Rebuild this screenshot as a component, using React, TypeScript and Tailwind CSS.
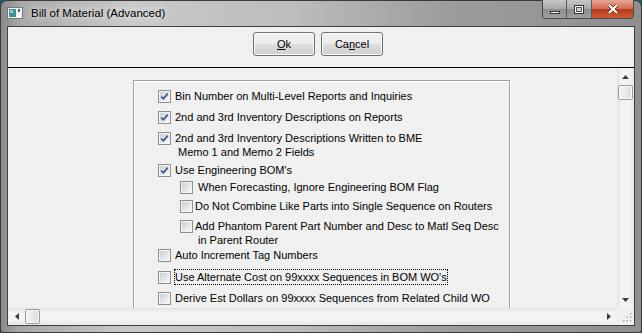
import type { ReactNode } from "react";

type Row = {
  lines: string[];
  checked?: boolean;
  sub?: boolean;
  focus?: boolean;
  lead?: boolean;
  mt: string;
};

const rows: Row[] = [
  { lines: ["Bin Number on Multi-Level Reports and Inquiries"], checked: true, mt: "mt-[8px]" },
  { lines: ["2nd and 3rd Inventory Descriptions on Reports"], checked: true, mt: "mt-[7px]" },
  {
    lines: ["2nd and 3rd Inventory Descriptions Written to BME", "Memo 1 and Memo 2 Fields"],
    checked: true,
    mt: "mt-[7px]",
  },
  { lines: ["Use Engineering BOM's"], checked: true, mt: "mt-[4px]" },
  { lines: ["When Forecasting, Ignore Engineering BOM Flag"], sub: true, lead: true, mt: "mt-[3px]" },
  { lines: ["Do Not Combine Like Parts into Single Sequence on Routers"], sub: true, mt: "mt-[5px]" },
  {
    lines: ["Add Phantom Parent Part Number and Desc to Matl Seq Desc", "in Parent Router"],
    sub: true,
    mt: "mt-[6px]",
  },
  { lines: ["Auto Increment Tag Numbers"], mt: "mt-[1px]" },
  { lines: ["Use Alternate Cost on 99xxxx Sequences in BOM WO's"], focus: true, mt: "mt-[8px]" },
  { lines: ["Derive Est Dollars on 99xxxx Sequences from Related Child WO"], mt: "mt-[7px]" },
];

function CheckBox({ checked }: { checked?: boolean }) {
  return (
    <span className="mt-[1px] flex h-[13px] w-[13px] shrink-0 items-center justify-center border border-[#8e8f8f] bg-[#f4f4f4] p-[1px]">
      <span className="relative block h-full w-full bg-[linear-gradient(135deg,#cbcfd5,#f7f7f7)]">
        {checked && (
          <svg viewBox="0 0 9 9" className="absolute inset-0 h-[9px] w-[9px]">
            <path d="M1.2 4.6 L3.4 6.8 L7.8 1.6" fill="none" stroke="#3c5489" strokeWidth="1.7" />
          </svg>
        )}
      </span>
    </span>
  );
}

function OptionRow({ row }: { row: Row }) {
  return (
    <div className={`flex items-start ${row.mt} ${row.sub ? "pl-[46px]" : "pl-[24px]"}`}>
      <CheckBox checked={row.checked} />
      <div className={`flex flex-col text-[11px] leading-[14px] text-black ${row.sub ? "ml-[2px]" : "ml-[4px]"}`}>
        <span className={row.focus ? "outline outline-1 outline-dotted outline-black" : ""}>
          {row.lead ? "\u00a0" : ""}
          {row.lines[0]}
        </span>
        {row.lines[1] && <span className="pl-[3px]">{row.lines[1]}</span>}
      </div>
    </div>
  );
}

function VButton({ children }: { children: ReactNode }) {
  return (
    <div className="flex h-[24px] w-[62px] items-center justify-center rounded-[3px] border border-[#707070] bg-[linear-gradient(#f2f2f2_0%,#ebebeb_48%,#dddddd_52%,#cfcfcf_100%)] text-[11px] text-black shadow-[inset_0_0_0_1px_#fcfcfc]">
      {children}
    </div>
  );
}

function Arrow({ dir }: { dir: "up" | "down" | "left" | "right" }) {
  const pts = {
    up: "0,4 7,4 3.5,0",
    down: "0,0 7,0 3.5,4",
    left: "4,0 4,7 0,3.5",
    right: "0,0 0,7 4,3.5",
  }[dir];
  const vertical = dir === "up" || dir === "down";
  return (
    <svg
      width={vertical ? 7 : 4}
      height={vertical ? 4 : 7}
      viewBox={vertical ? "0 0 7 4" : "0 0 4 7"}
    >
      <polygon points={pts} fill="#3a3a3a" />
    </svg>
  );
}

function Thumb() {
  return (
    <div className="h-[15px] w-[15px] shrink-0 rounded-[2px] border border-[#9a9a9a] bg-[linear-gradient(90deg,#f4f4f4,#dcdcdc)] shadow-[inset_0_0_0_1px_#fbfbfb]" />
  );
}

export default function App() {
  return (
    <div className="h-[333px] w-[642px] overflow-hidden bg-[#1f5a66] font-['Liberation_Sans',Arial,sans-serif]">
      <div className="flex h-full w-full flex-col rounded-t-[7px] rounded-b-[3px] border border-[#3a3a3a] bg-[linear-gradient(90deg,#8a8a8a_0%,#a8a8a8_3%,#c9c9c9_20%,#bdbdbd_45%,#9c9c9c_70%,#8f8f8f_100%)]">
        {/* title bar */}
        <div className="relative flex h-[25px] shrink-0 items-center pl-[6px]">
          <svg width="16" height="12" viewBox="0 0 16 12" className="mt-[-1px]">
            <rect x="0.5" y="0.5" width="15" height="11" fill="#f4f6f6" stroke="#6f7a7c" />
            <rect x="2" y="2" width="7" height="8" fill="#3f8f8f" />
            <rect x="3" y="3" width="3" height="3" fill="#8fd0cc" />
            <rect x="11" y="2" width="2" height="3" fill="#2f6f8f" />
          </svg>
          <span className="ml-[8px] mt-[1px] text-[11.5px] text-black [text-shadow:0_0_6px_#e8e8e8,0_0_10px_#e8e8e8]">
            Bill of Material (Advanced)
          </span>
          <div className="absolute right-[7px] top-[-1px] flex h-[19px] overflow-hidden rounded-b-[4px] border border-t-0 border-[#4a4a4a]">
            <div className="flex w-[24px] items-center justify-center border-r border-[#5a5a5a] bg-[linear-gradient(#c8c8c8,#a8a8a8_50%,#8c8c8c_50%,#a0a0a0)]">
              <div className="mt-[6px] h-[3px] w-[10px] border border-[#333] bg-white" />
            </div>
            <div className="flex w-[25px] items-center justify-center border-r border-[#5a5a5a] bg-[linear-gradient(#c8c8c8,#a8a8a8_50%,#8c8c8c_50%,#a0a0a0)]">
              <div className="h-[9px] w-[10px] border border-[#333] bg-white p-[1px]">
                <div className="h-full w-full border border-[#555] bg-[#cfcfcf]" />
              </div>
            </div>
            <div className="flex w-[41px] items-center justify-center bg-[linear-gradient(#e7a795,#d46a4f_50%,#b83a1c_50%,#cf5a34)]">
              <svg width="12" height="10" viewBox="0 0 12 10">
                <path d="M2 1 L10 9 M10 1 L2 9" stroke="#5a1a10" strokeWidth="3.4" />
                <path d="M2 1 L10 9 M10 1 L2 9" stroke="#ffffff" strokeWidth="2.2" />
              </svg>
            </div>
          </div>
        </div>

        {/* client */}
        <div className="flex min-h-0 flex-1 flex-col px-[6px] pb-[6px]">
          <div className="flex min-h-0 flex-1 flex-col border border-[#404040] bg-[#f0f0f0]">
            <div className="flex h-[41px] shrink-0 items-start gap-[6px] border-b border-black pl-[245px] pt-[5px]">
              <VButton>
                <span>
                  <span className="underline">O</span>k
                </span>
              </VButton>
              <VButton>
                <span>
                  Ca<span className="underline">n</span>cel
                </span>
              </VButton>
            </div>

            <div className="flex min-h-0 flex-1">
              <div className="flex min-h-0 min-w-0 flex-1 flex-col">
                <div className="min-h-0 flex-1 overflow-hidden">
                  <div className="ml-[125px] mt-[12px] h-[260px] w-[377px] border border-[#a0a0a0] shadow-[inset_1px_1px_0_#ffffff,1px_1px_0_#ffffff]">
                    {rows.map((row) => (
                      <OptionRow key={row.lines[0]} row={row} />
                    ))}
                  </div>
                </div>
                {/* horizontal scrollbar */}
                <div className="flex h-[17px] shrink-0 items-center bg-[linear-gradient(#e3e3e3,#f4f4f4_30%,#f4f4f4_70%,#e8e8e8)]">
                  <div className="flex w-[17px] items-center justify-center">
                    <Arrow dir="left" />
                  </div>
                  <Thumb />
                  <div className="flex-1" />
                  <div className="flex w-[17px] items-center justify-center">
                    <Arrow dir="right" />
                  </div>
                </div>
              </div>

              {/* vertical scrollbar */}
              <div className="flex w-[17px] shrink-0 flex-col">
                <div className="flex min-h-0 flex-1 flex-col items-center bg-[linear-gradient(90deg,#e3e3e3,#f4f4f4_30%,#f4f4f4_70%,#e8e8e8)]">
                  <div className="flex h-[17px] shrink-0 items-center justify-center">
                    <Arrow dir="up" />
                  </div>
                  <Thumb />
                  <div className="flex-1" />
                  <div className="flex h-[17px] shrink-0 items-center justify-center">
                    <Arrow dir="down" />
                  </div>
                </div>
                <div className="flex h-[17px] shrink-0 items-end justify-end bg-[#f0f0f0] p-[2px]">
                  <svg width="11" height="11" viewBox="0 0 11 11">
                    {[
                      [9, 1],
                      [9, 4.5],
                      [5.5, 4.5],
                      [9, 8],
                      [5.5, 8],
                      [2, 8],
                    ].map(([x, y]) => (
                      <rect key={`${x}-${y}`} x={x} y={y} width="1.5" height="1.5" fill="#a8a8a8" />
                    ))}
                  </svg>
                </div>
              </div>
            </div>
          </div>
        </div>
      </div>
    </div>
  );
}
